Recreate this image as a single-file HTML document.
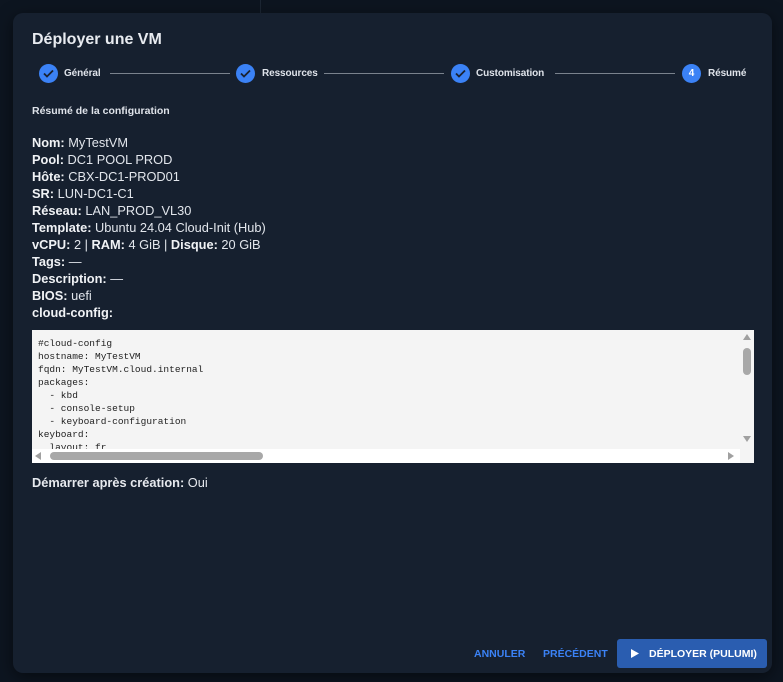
<!DOCTYPE html>
<html><head><meta charset="utf-8"><style>
*{box-sizing:border-box;margin:0;padding:0}
body{width:783px;height:682px;background:#0d1520;font-family:"Liberation Sans",sans-serif;color:#e6e9ee;position:relative;overflow:hidden}
.bgline{position:absolute;left:260px;top:0;width:1px;height:13px;background:#1c2633}
.dlg{position:absolute;left:13px;top:13px;width:759px;height:660px;background:#16202f;border-radius:10px;box-shadow:0 4px 16px rgba(0,0,0,.5)}
h1{position:absolute;left:19px;top:18px;font-size:16px;font-weight:bold;color:#e8ebf0}
.c{position:absolute;top:51px;width:19px;height:19px;border-radius:50%;background:#3b82f6;display:flex;align-items:center;justify-content:center;font-size:10px;font-weight:bold;color:#fff}
.l{position:absolute;top:55px;font-size:10px;font-weight:bold;color:#dfe3ea;letter-spacing:-0.1px}
.ln{position:absolute;top:60px;height:1px;background:#7a828d}
.sub{position:absolute;left:19px;top:92px;font-size:10.5px;font-weight:bold;color:#dfe3ea}
.info{position:absolute;left:19px;top:121px;font-size:12.8px;line-height:17px;color:#e2e6ec}
.info b{font-weight:bold;color:#f0f2f5}
.code{position:absolute;left:19px;top:317px;width:722px;height:133px;background:#f4f4f4;overflow:hidden}
pre{position:absolute;left:6px;top:7px;font-family:"Liberation Mono",monospace;font-size:9.5px;line-height:13px;color:#222}
.vs{position:absolute;right:0;top:0;width:14px;height:119px;background:#f4f4f4}
.hs{position:absolute;left:0;bottom:0;width:708px;height:14px;background:#fff}
.start{position:absolute;left:19px;top:462px;font-size:12.8px}
.btn{position:absolute;font-size:10.5px;font-weight:bold;color:#3b82f6}
.dep{position:absolute;left:604px;top:626px;width:150px;height:29px;background:#2a5db0;border-radius:3px;color:#fff;font-size:10.5px;font-weight:bold;display:flex;align-items:center;padding-left:14px}
</style></head><body>
<div class="bgline"></div>
<div class="dlg">
<h1>Déployer une VM</h1>
<div class="c" style="left:26px"><svg width="11" height="9" viewBox="0 0 11 9"><path d="M1 4.5l3 3 6-6" stroke="#1a2230" stroke-width="1.8" fill="none"/></svg></div>
<div class="l" style="left:51px">Général</div>
<div class="ln" style="left:97px;width:120px"></div>
<div class="c" style="left:223px"><svg width="11" height="9" viewBox="0 0 11 9"><path d="M1 4.5l3 3 6-6" stroke="#1a2230" stroke-width="1.8" fill="none"/></svg></div>
<div class="l" style="left:249px">Ressources</div>
<div class="ln" style="left:311px;width:120px"></div>
<div class="c" style="left:438px"><svg width="11" height="9" viewBox="0 0 11 9"><path d="M1 4.5l3 3 6-6" stroke="#1a2230" stroke-width="1.8" fill="none"/></svg></div>
<div class="l" style="left:463px">Customisation</div>
<div class="ln" style="left:542px;width:120px"></div>
<div class="c" style="left:669px">4</div>
<div class="l" style="left:695px">Résumé</div>
<div class="sub">Résumé de la configuration</div>
<div class="info">
<div><b>Nom:</b> MyTestVM</div>
<div><b>Pool:</b> DC1 POOL PROD</div>
<div><b>Hôte:</b> CBX-DC1-PROD01</div>
<div><b>SR:</b> LUN-DC1-C1</div>
<div><b>Réseau:</b> LAN_PROD_VL30</div>
<div><b>Template:</b> Ubuntu 24.04 Cloud-Init (Hub)</div>
<div><b>vCPU:</b> 2 | <b>RAM:</b> 4 GiB | <b>Disque:</b> 20 GiB</div>
<div><b>Tags:</b> —</div>
<div><b>Description:</b> —</div>
<div><b>BIOS:</b> uefi</div>
<div><b>cloud-config:</b></div>
</div>
<div class="code">
<pre>#cloud-config
hostname: MyTestVM
fqdn: MyTestVM.cloud.internal
packages:
  - kbd
  - console-setup
  - keyboard-configuration
keyboard:
  layout: fr</pre>
<div class="vs">
<div style="position:absolute;left:3px;top:4px;width:0;height:0;border-left:4px solid transparent;border-right:4px solid transparent;border-bottom:6px solid #a0a0a0"></div>
<div style="position:absolute;left:3px;top:18px;width:8px;height:27px;background:#a8a8a8;border-radius:4px"></div>
<div style="position:absolute;left:3px;top:106px;width:0;height:0;border-left:4px solid transparent;border-right:4px solid transparent;border-top:6px solid #a0a0a0"></div>
</div>
<div class="hs">
<div style="position:absolute;left:3px;top:3px;width:0;height:0;border-top:4px solid transparent;border-bottom:4px solid transparent;border-right:6px solid #a0a0a0"></div>
<div style="position:absolute;left:18px;top:3px;width:213px;height:8px;background:#a8a8a8;border-radius:4px"></div>
<div style="position:absolute;left:696px;top:3px;width:0;height:0;border-top:4px solid transparent;border-bottom:4px solid transparent;border-left:6px solid #a0a0a0"></div>
</div>
</div>
<div class="start"><b>Démarrer après création:</b> Oui</div>
<div class="btn" style="left:461px;top:635px">ANNULER</div>
<div class="btn" style="left:530px;top:635px">PRÉCÉDENT</div>
<div class="dep"><svg width="8" height="9" viewBox="0 0 8 9"><path d="M0 0L8 4.5 0 9z" fill="#fff"/></svg><span style="margin-left:10px">DÉPLOYER (PULUMI)</span></div>
</div>
</body></html>
